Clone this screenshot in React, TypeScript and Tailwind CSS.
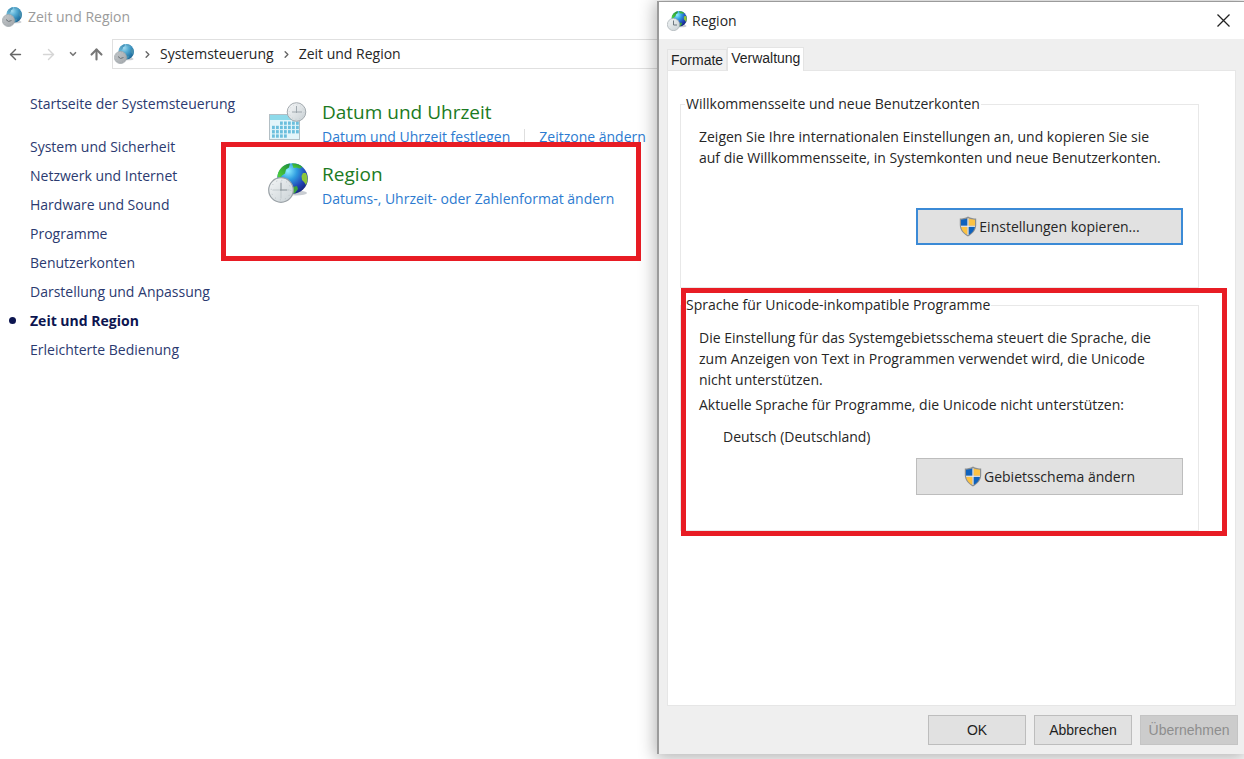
import { useState } from "react";
import { ArrowLeft, ArrowRight, ArrowUp, ChevronDown, ChevronRight } from "lucide-react";

const categories = [
  "System und Sicherheit",
  "Netzwerk und Internet",
  "Hardware und Sound",
  "Programme",
  "Benutzerkonten",
  "Darstellung und Anpassung",
  "Zeit und Region",
  "Erleichterte Bedienung",
];

type RegionIconProps = { className: string; id: string; muted?: boolean; small?: boolean };

function RegionIcon({ className, id, muted = false, small = false }: RegionIconProps) {
  return (
    <svg viewBox="0 0 40 40" className={className} aria-hidden="true">
      <defs>
        <radialGradient id={`${id}-sea`} cx="0.35" cy="0.25" r="0.85">
          <stop offset="0" stopColor={muted ? "#a5dcf0" : "#8ff0ff"} />
          <stop offset="0.35" stopColor={muted ? "#58aed4" : "#2f9be0"} />
          <stop offset="0.7" stopColor={muted ? "#2a7fb0" : "#2142b4"} />
          <stop offset="1" stopColor={muted ? "#1f5f8c" : "#14206e"} />
        </radialGradient>
        <linearGradient id={`${id}-land`} x1="0" y1="1" x2="1" y2="0">
          <stop offset="0" stopColor={muted ? "#6fb9d6" : "#55d83a"} />
          <stop offset="1" stopColor={muted ? "#3c88b0" : "#1f8a3a"} />
        </linearGradient>
        <linearGradient id={`${id}-face`} x1="0" y1="0" x2="1" y2="1">
          <stop offset="0" stopColor={muted ? "#c4c8cb" : "#f4f6f7"} />
          <stop offset="1" stopColor={muted ? "#a2a7ab" : "#c9d1d5"} />
        </linearGradient>
      </defs>
      <ellipse cx="28" cy="30" rx="11" ry="2.500" fill="#c9cdd2" />
      <circle cx="24.500" cy="15.500" r="15.300" fill={`url(#${id}-sea)`} />
      <path d="M9.500 14C9.500 7 15 1.500 22 .5l-1 4-3 2-1 4-3 2-2 3z" fill={`url(#${id}-land)`} />
      <path d="M24 .500c4-.500 8 1 10.500 3.500l-3 1.500-3-1-3 .500z" fill={`url(#${id}-land)`} />
      <path d="M35 10l3 0c2 4 2 8 0 12l-2-3-2-2-.5-4z" fill={muted ? "#468fae" : "#8cc63b"} />
      <path d="M25 24l4-1 1 3-3 4-3 .500z" fill={muted ? "#468fae" : "#3da53b"} />
      <circle cx="13" cy="27" r="12.300" fill={`url(#${id}-face)`} stroke="#9ba2a7" strokeWidth="1.200" />
      <circle cx="13" cy="27" r="9.800" fill="none" stroke={muted ? "#8b9095" : "#b9c1c6"} strokeWidth="1" strokeDasharray="1 4.130" />
      {muted && <path d="M8 25l5 4 6-2" fill="none" stroke="#6c7277" strokeWidth="2" />}
      {small && <path d="M13 19v9h7" fill="none" stroke="#6f7980" strokeWidth="2" />}
      {!muted && !small && (
        <>
          <path d="M13 18.500v17M4.500 27h17" fill="none" stroke="#b3babf" strokeWidth="0.700" />
          <path d="M13 20v7.500M12 27h7" fill="none" stroke="#8c959b" strokeWidth="0.900" />
        </>
      )}
    </svg>
  );
}

function DateIcon() {
  return (
    <svg viewBox="0 0 40 40" className="size-10" aria-hidden="true">
      <defs>
        <linearGradient id="dial" x1="0" y1="0" x2="1" y2="1">
          <stop offset="0" stopColor="#f7f8f9" />
          <stop offset="1" stopColor="#c8d0d4" />
        </linearGradient>
      </defs>
      <rect x="1.500" y="12.500" width="30" height="25" fill="#e3f5fa" stroke="#b3bfc5" />
      <rect x="2" y="13" width="29" height="5" fill="#8edaea" />
      {[19.500, 23.800, 28.100, 32.400].map((y, row) =>
        [4, 8, 12, 16, 20, 24, 28]
          .filter((_, col) => (row !== 0 || col > 1) && (row !== 3 || col < 4))
          .map((x) => <rect key={`${x}-${y}`} x={x} y={y} width="2.800" height="3.300" fill="#6cbfdd" />)
      )}
      <circle cx="28.500" cy="10" r="9.300" fill="url(#dial)" stroke="#a3aaaf" />
      <circle cx="28.500" cy="10" r="7.300" fill="none" stroke="#bfc6ca" strokeWidth="0.800" strokeDasharray="0.800 3.020" />
      <path d="M28.500 4v7M24 10h10" fill="none" stroke="#98a1a8" strokeWidth="0.900" />
    </svg>
  );
}

function Shield() {
  return (
    <svg viewBox="0 0 18 21" className="h-[21px] w-[18px]" aria-hidden="true">
      <path d="M9 .5C6.500 2 3.500 2.500.8 2.500V9c0 5 3.500 9 8.200 11.500C13.700 18 17.200 14 17.200 9V2.500C14.500 2.500 11.500 2 9 .5z" fill="#8c8f91" />
      <path d="M8.500 2.200C6.500 3.200 4 3.600 2 3.700v6h6.500z" fill="#0f62bd" />
      <path d="M9.500 2.200c2 1 4.500 1.400 6.500 1.500v6H9.500z" fill="#fcc243" />
      <path d="M8.500 10.700v8.300C5 17 2.600 14.200 2.100 10.700z" fill="#fcc243" />
      <path d="M9.500 10.700v8.300c3.500-2 5.900-4.800 6.400-8.300z" fill="#0f62bd" />
      <path d="M8.500 2.200h1V9.700H16v1H9.500V19h-1v-8.300H2v-1h6.500z" fill="#f1f4f6" />
    </svg>
  );
}

function ControlPanel() {
  return (
    <div className="min-w-0">
      <header className="flex h-[39px] items-center gap-[6px] pb-[5px] pl-[2px] text-[#9b9b9b]">
        <RegionIcon id="caption" muted className="size-5" />
        <h1>Zeit und Region</h1>
      </header>

      <nav className="flex h-[30px] items-center" aria-label="Adressleiste">
        <div className="flex w-28 shrink-0 items-center pl-[7px]">
          <button type="button" aria-label="Zurück" className="text-[#666]">
            <ArrowLeft size={17} />
          </button>
          <button type="button" aria-label="Vorwärts" className="ml-4 text-[#d5d5d5]">
            <ArrowRight size={17} />
          </button>
          <button type="button" aria-label="Verlauf" className="ml-[11px] text-[#777]">
            <ChevronDown size={10} strokeWidth={4} />
          </button>
          <button type="button" aria-label="Nach oben" className="ml-[10px] text-[#777]">
            <ArrowUp size={17} strokeWidth={3} />
          </button>
        </div>
        <div className="flex h-full flex-1 items-center border border-r-0 border-[#e0e0e0] pl-px text-[#262626]">
          <RegionIcon id="address" muted className="size-5" />
          <ChevronRight size={11} strokeWidth={3} className="ml-2 text-[#666]" />
          <a href="#systemsteuerung" className="ml-[7px]">Systemsteuerung</a>
          <ChevronRight size={11} strokeWidth={3} className="ml-[7px] text-[#666]" />
          <a href="#zeit" className="ml-[7px]">Zeit und Region</a>
        </div>
      </nav>

      <div className="flex">
        <aside className="w-[268px] shrink-0 pl-[30px] pt-5 leading-[29px] text-[#2b3a70]">
          <a href="#start">Startseite der Systemsteuerung</a>
          <ul className="mt-[14px]">
            {categories.map((name) => (
              <li key={name} className="relative">
                {name === "Zeit und Region" ? (
                  <>
                    <span className="absolute -left-[21px] top-[11px] size-[7px] rounded-full bg-[#0c1550]" />
                    <a href="#zeit" className="font-bold text-[#0c1550]">{name}</a>
                  </>
                ) : (
                  <a href="#kategorie">{name}</a>
                )}
              </li>
            ))}
          </ul>
        </aside>

        <main className="min-w-0 flex-1 whitespace-nowrap pt-[30px]">
          <section className="flex gap-[14px]">
            <div className="pt-[3px]">
              <DateIcon />
            </div>
            <div>
              <h2 className="text-[19px] leading-[26px] text-[#1b7a22]">Datum und Uhrzeit</h2>
              <p className="flex items-center leading-6 text-[#2d7bd0]">
                <a href="#datum">Datum und Uhrzeit festlegen</a>
                <span className="mx-[14px] h-4 w-px bg-[#dedede]" />
                <a href="#zeitzone">Zeitzone ändern</a>
              </p>
            </div>
          </section>
          <section className="relative mt-3 flex gap-[14px]">
            <div className="pt-[2px]">
              <RegionIcon id="region" className="size-10" />
            </div>
            <div>
              <h2 className="text-[19px] leading-[26px] text-[#1b7a22]">Region</h2>
              <a href="#region" className="leading-6 text-[#2d7bd0]">Datums-, Uhrzeit- oder Zahlenformat ändern</a>
            </div>
            {/* highlight */}
            <div className="pointer-events-none absolute -left-[47px] -top-[19px] h-[119px] w-[420px] border-5 border-[#e81c24]" />
          </section>
        </main>
      </div>
    </div>
  );
}

function RegionDialog() {
  const [tab, setTab] = useState("Verwaltung");

  return (
    <div
      role="dialog"
      aria-labelledby="dialog-title"
      className="relative mb-[5px] mt-px flex min-w-0 flex-col border-l-2 border-t border-[#9b9b9b] bg-[#efefef] text-[#262626] shadow-[0_2px_16px_2px_rgba(0,0,0,0.3)]"
    >
      <header className="flex h-[37px] items-center bg-white pl-2 pr-[14px]">
        <RegionIcon id="dialog" small className="size-5" />
        <h2 id="dialog-title" className="ml-[5px] flex-1">Region</h2>
        <button type="button" aria-label="Schließen" className="text-[#222]">
          <svg viewBox="0 0 13 13" className="size-[13px]" aria-hidden="true">
            <path d="M.5.5l12 12M12.500.5l-12 12" stroke="currentColor" strokeWidth="1.300" />
          </svg>
        </button>
      </header>

      <div role="tablist" className="flex h-[31px] items-end pl-2 font-[Liberation_Sans,sans-serif] text-[#1f1f1f]">
        {["Formate", "Verwaltung"].map((name) => (
          <button
            key={name}
            type="button"
            role="tab"
            aria-selected={tab === name}
            onClick={() => setTab(name)}
            className={
              tab === name
                ? "relative -mb-px h-6 border border-b-0 border-[#e4e4e4] bg-white px-[3px] pb-1"
                : "h-[21px] border border-b-0 border-[#e4e4e4] bg-[#f1f1f1] px-[3px]"
            }
          >
            {name}
          </button>
        ))}
      </div>

      <div className="mx-2 flex-1 border border-[#e6e6e6] bg-white pb-4 pl-3 pr-9 pt-[23px]">
        <fieldset className="border border-[#e8e8e8] px-1">
          <legend className="px-px leading-5">Willkommensseite und neue Benutzerkonten</legend>
          <div className="flex flex-col pb-[42px] pl-[14px] pr-[11px] pt-3 leading-[21px]">
            <p className="whitespace-nowrap">
              Zeigen Sie Ihre internationalen Einstellungen an, und kopieren Sie sie
              <br />
              auf die Willkommensseite, in Systemkonten und neue Benutzerkonten.
            </p>
            <button
              type="button"
              className="mt-10 flex h-[37px] w-[267px] items-center justify-center gap-[2px] self-end border-2 border-[#3b8ad6] bg-[#e1e1e1]"
            >
              <Shield />
              Einstellungen kopieren...
            </button>
          </div>
        </fieldset>

        <div className="relative mt-[7px]">
          <fieldset className="border border-[#e8e8e8] px-1">
            <legend className="px-px leading-5">Sprache für Unicode-inkompatible Programme</legend>
            <div className="flex flex-col pb-[35px] pl-[14px] pr-[11px] pt-3 leading-[21px]">
              <p className="whitespace-nowrap">
                Die Einstellung für das Systemgebietsschema steuert die Sprache, die
                <br />
                zum Anzeigen von Text in Programmen verwendet wird, die Unicode
                <br />
                nicht unterstützen.
              </p>
              <p className="mt-1 whitespace-nowrap">Aktuelle Sprache für Programme, die Unicode nicht unterstützen:</p>
              <p className="ml-6 mt-[11px]">Deutsch (Deutschland)</p>
              <button
                type="button"
                className="mt-[11px] flex h-[37px] w-[267px] items-center justify-center gap-[2px] self-end border border-[#bdbdbd] bg-[#e1e1e1]"
              >
                <Shield />
                Gebietsschema ändern
              </button>
            </div>
          </fieldset>
          {/* highlight */}
          <div className="pointer-events-none absolute -bottom-[5px] -right-[28px] -top-[7px] left-[1px] border-5 border-[#e81c24]" />
        </div>
      </div>

      <footer className="flex h-12 items-center justify-end gap-2 pr-[6px] font-[Liberation_Sans,sans-serif] text-[#1f1f1f]">
        <button type="button" className="h-[30px] w-[98px] border border-[#bdbdbd] bg-[#e1e1e1]">OK</button>
        <button type="button" className="h-[30px] w-[98px] border border-[#bdbdbd] bg-[#e1e1e1]">Abbrechen</button>
        <button type="button" disabled className="h-[30px] w-[98px] border border-[#c4c4c4] bg-[#cccccc] text-[#8e8e8e]">
          Übernehmen
        </button>
      </footer>
    </div>
  );
}

export default function App() {
  return (
    <div className="grid min-h-screen grid-cols-[657fr_587fr] overflow-hidden bg-white font-[Open_Sans,sans-serif] text-[14px] leading-5">
      <ControlPanel />
      <RegionDialog />
    </div>
  );
}
